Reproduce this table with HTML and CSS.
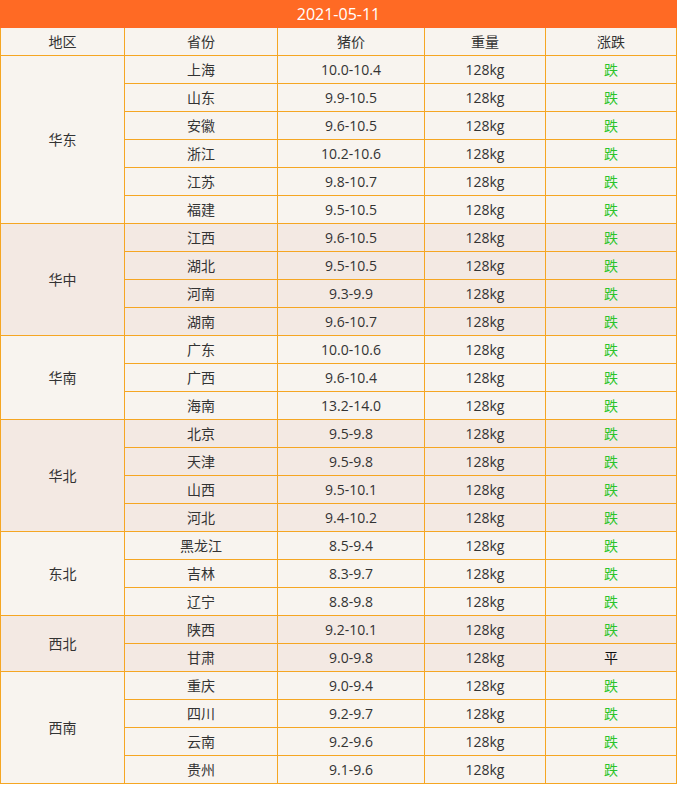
FILE: index.html
```html
<!DOCTYPE html>
<html lang="zh">
<head>
<meta charset="utf-8">
<link rel="stylesheet" href="styles.css">
</head>
<body>
<table class="price-table">
<colgroup>
<col class="c1"><col class="c2"><col class="c3"><col class="c4"><col class="c5">
</colgroup>
<thead>
<tr class="title-row"><th colspan="5">2021-05-11</th></tr>
<tr class="head-row"><th>地区</th><th>省份</th><th>猪价</th><th>重量</th><th>涨跌</th></tr>
</thead>
<tbody class="g-light">
<tr><td rowspan="6" class="region">华东</td><td>上海</td><td>10.0-10.4</td><td>128kg</td><td class="down">跌</td></tr>
<tr><td>山东</td><td>9.9-10.5</td><td>128kg</td><td class="down">跌</td></tr>
<tr><td>安徽</td><td>9.6-10.5</td><td>128kg</td><td class="down">跌</td></tr>
<tr><td>浙江</td><td>10.2-10.6</td><td>128kg</td><td class="down">跌</td></tr>
<tr><td>江苏</td><td>9.8-10.7</td><td>128kg</td><td class="down">跌</td></tr>
<tr><td>福建</td><td>9.5-10.5</td><td>128kg</td><td class="down">跌</td></tr>
</tbody>
<tbody class="g-dark">
<tr><td rowspan="4" class="region">华中</td><td>江西</td><td>9.6-10.5</td><td>128kg</td><td class="down">跌</td></tr>
<tr><td>湖北</td><td>9.5-10.5</td><td>128kg</td><td class="down">跌</td></tr>
<tr><td>河南</td><td>9.3-9.9</td><td>128kg</td><td class="down">跌</td></tr>
<tr><td>湖南</td><td>9.6-10.7</td><td>128kg</td><td class="down">跌</td></tr>
</tbody>
<tbody class="g-light">
<tr><td rowspan="3" class="region">华南</td><td>广东</td><td>10.0-10.6</td><td>128kg</td><td class="down">跌</td></tr>
<tr><td>广西</td><td>9.6-10.4</td><td>128kg</td><td class="down">跌</td></tr>
<tr><td>海南</td><td>13.2-14.0</td><td>128kg</td><td class="down">跌</td></tr>
</tbody>
<tbody class="g-dark">
<tr><td rowspan="4" class="region">华北</td><td>北京</td><td>9.5-9.8</td><td>128kg</td><td class="down">跌</td></tr>
<tr><td>天津</td><td>9.5-9.8</td><td>128kg</td><td class="down">跌</td></tr>
<tr><td>山西</td><td>9.5-10.1</td><td>128kg</td><td class="down">跌</td></tr>
<tr><td>河北</td><td>9.4-10.2</td><td>128kg</td><td class="down">跌</td></tr>
</tbody>
<tbody class="g-light">
<tr><td rowspan="3" class="region">东北</td><td>黑龙江</td><td>8.5-9.4</td><td>128kg</td><td class="down">跌</td></tr>
<tr><td>吉林</td><td>8.3-9.7</td><td>128kg</td><td class="down">跌</td></tr>
<tr><td>辽宁</td><td>8.8-9.8</td><td>128kg</td><td class="down">跌</td></tr>
</tbody>
<tbody class="g-dark">
<tr><td rowspan="2" class="region">西北</td><td>陕西</td><td>9.2-10.1</td><td>128kg</td><td class="down">跌</td></tr>
<tr><td>甘肃</td><td>9.0-9.8</td><td>128kg</td><td class="flat">平</td></tr>
</tbody>
<tbody class="g-light">
<tr><td rowspan="4" class="region">西南</td><td>重庆</td><td>9.0-9.4</td><td>128kg</td><td class="down">跌</td></tr>
<tr><td>四川</td><td>9.2-9.7</td><td>128kg</td><td class="down">跌</td></tr>
<tr><td>云南</td><td>9.2-9.6</td><td>128kg</td><td class="down">跌</td></tr>
<tr><td>贵州</td><td>9.1-9.6</td><td>128kg</td><td class="down">跌</td></tr>
</tbody>
</table>
</body>
</html>
```
FILE: styles.css
```css
html, body {
  margin: 0;
  padding: 0;
  background: #ffffff;
}

.price-table {
  border-collapse: collapse;
  table-layout: fixed;
  width: 676px;
  font-family: "Open Sans", "Noto Sans CJK SC", sans-serif;
  font-size: 14px;
  color: #333333;
}

.price-table th,
.price-table td {
  border: 1px solid #f5a623;
  height: 27px;
  padding: 0;
  text-align: center;
  vertical-align: middle;
  font-weight: normal;
  line-height: 20px;
}

.title-row th {
  background: #ff6a24;
  color: #ffffff;
  font-size: 16px;
  border-color: #ff6a24;
  border-top: none;
  height: 27px;
}

.head-row th {
  background: #f8f4ef;
  color: #333333;
}

.c1 { width: 124px; }
.c2 { width: 153px; }
.c3 { width: 147px; }
.c4 { width: 121px; }
.c5 { width: 131px; }

.g-light td { background: #f8f4ef; }
.g-dark td { background: #f3e9e3; }

.down {
  color: #2bc42a;
  font-weight: bold;
}

.flat {
  color: #111111;
  font-weight: bold;
}
```
